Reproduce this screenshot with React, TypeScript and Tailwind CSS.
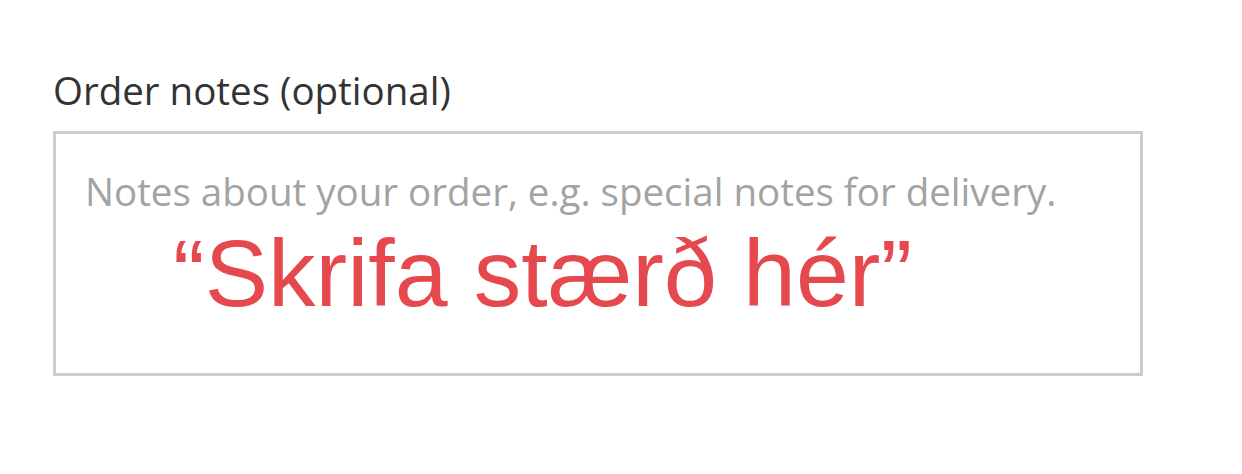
export default function App() {
  return (
    <div className="min-h-[474px] w-[1242px] bg-white px-[53px] pt-[67px]">
      <label className="block font-['Open_Sans',sans-serif] text-[38.5px] leading-[46px] text-[#333333]">
        Order notes (optional)
      </label>
      <div className="mt-[18px] h-[245px] w-[1090px] border-[3px] border-[#cccccc] px-[29px] pt-[34px]">
        <p className="font-['Open_Sans',sans-serif] text-[38.5px] leading-[46px] text-[#a3a3a3]">
          Notes about your order, e.g. special notes for delivery.
        </p>
        <p className="ml-[88px] mt-[9px] font-['Liberation_Sans',Arial,sans-serif] text-[95px] leading-[100px] text-[#e5484d]">
          “Skrifa stærð hér”
        </p>
      </div>
    </div>
  )
}
